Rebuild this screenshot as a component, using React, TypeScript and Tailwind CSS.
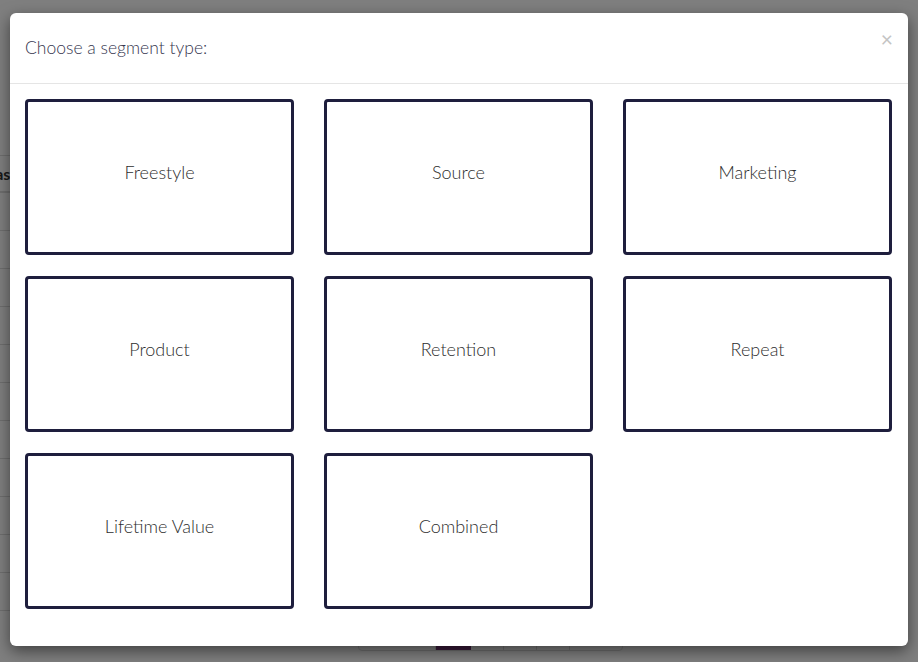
import React from "react";

const segmentTypes = [
  "Freestyle",
  "Source",
  "Marketing",
  "Product",
  "Retention",
  "Repeat",
  "Lifetime Value",
  "Combined",
];

function BackgroundPage() {
  const rows = Array.from({ length: 11 });
  return (
    <div className="pt-[155px]">
      <div className="-ml-[30px] w-[600px]">
        <div className="h-[38px] border-t border-b-2 border-[#dddddd] flex items-center pl-[6px] text-[16px] font-bold text-[#333]">
          Alias
        </div>
        {rows.map((_, i) => (
          <div key={i} className="h-[38px] border-b border-[#dddddd]" />
        ))}
      </div>
      <div className="mt-[6px] pl-[358px] flex">
        <div className="flex h-[34px] border border-[#dddddd] rounded-[4px] overflow-hidden text-[14px]">
          <div className="w-[77px] border-r border-[#dddddd]" />
          <div className="w-[35px] bg-[#743474]" />
          <div className="w-[33px] border-r border-[#dddddd]" />
          <div className="w-[33px] border-r border-[#dddddd]" />
          <div className="w-[33px] border-r border-[#dddddd]" />
          <div className="w-[52px]" />
        </div>
      </div>
    </div>
  );
}

export default function App() {
  return (
    <div
      className="relative h-[662px] w-[918px] overflow-hidden bg-white"
      style={{ fontFamily: "Lato, 'Open Sans', sans-serif" }}
    >
      <BackgroundPage />

      <div className="absolute inset-0 bg-black/50" />

      <div className="absolute left-[10px] top-[13px] w-[898px] rounded-[6px] bg-white shadow-[0_5px_15px_rgba(0,0,0,0.5)]">
        <div className="relative h-[71px] border-b border-[#e5e5e5] px-[15px] flex items-center">
          <h4 className="text-[17.5px] font-light text-[#36364f] leading-none">
            Choose a segment type:
          </h4>
          <button
            type="button"
            className="absolute right-[15px] top-[15px] text-[21px] leading-none text-[#c4c4c4]"
          >
            ×
          </button>
        </div>
        <div className="px-[15px] pt-[15px] pb-[37px] grid grid-cols-[269px_269px_269px] gap-x-[30px] gap-y-[21px]">
          {segmentTypes.map((name) => (
            <div
              key={name}
              className="h-[156px] rounded-[4px] border-[3px] border-[#1e1e3d] flex items-center justify-center pb-[9px] text-[18px] font-light text-[#2e2e2e]"
            >
              {name}
            </div>
          ))}
        </div>
      </div>
    </div>
  );
}
